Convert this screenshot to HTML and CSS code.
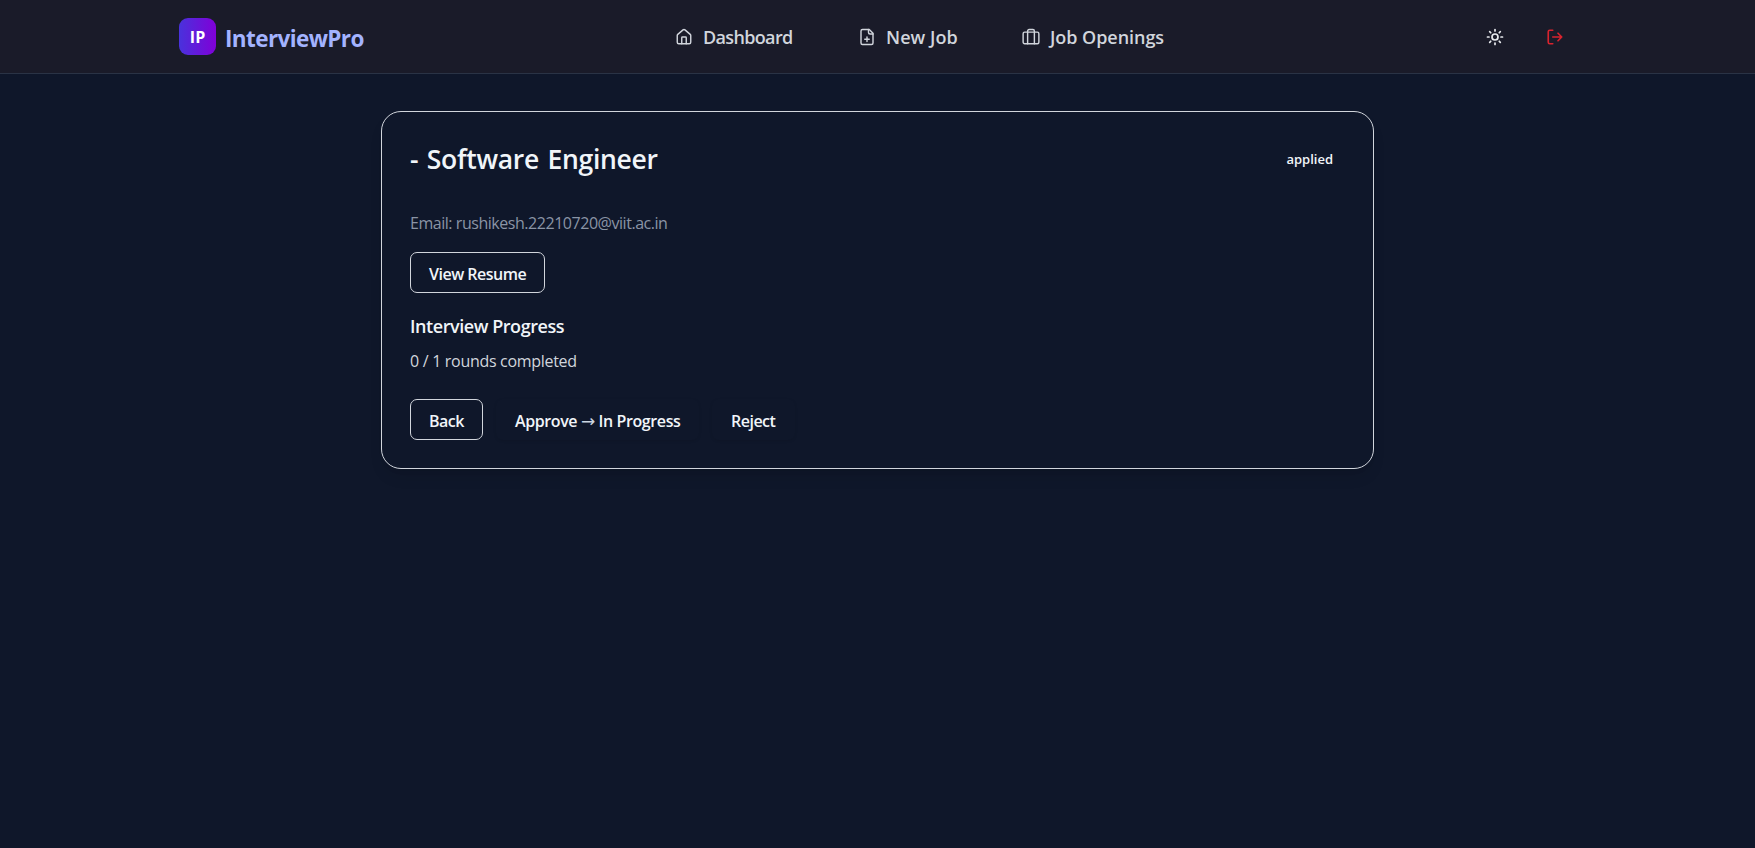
FILE: index.html
```html
<!DOCTYPE html>
<html lang="en">
<head>
<meta charset="utf-8">
<title>InterviewPro</title>
<link rel="stylesheet" href="styles.css">
</head>
<body>
<header class="topbar">
  <a class="brand"><span class="logo">IP</span><span class="brand-name">InterviewPro</span></a>
  <nav class="nav">
    <a class="nav-item dashboard"><svg class="icon" viewBox="0 0 24 24"><path d="M15 21v-8a1 1 0 0 0-1-1h-4a1 1 0 0 0-1 1v8"/><path d="M3 10a2 2 0 0 1 .709-1.528l7-5.999a2 2 0 0 1 2.582 0l7 5.999A2 2 0 0 1 21 10v9a2 2 0 0 1-2 2H5a2 2 0 0 1-2-2z"/></svg><span>Dashboard</span></a>
    <a class="nav-item new-job"><svg class="icon" viewBox="0 0 24 24"><path d="M15 2H6a2 2 0 0 0-2 2v16a2 2 0 0 0 2 2h12a2 2 0 0 0 2-2V7Z"/><path d="M14 2v4a2 2 0 0 0 2 2h4"/><path d="M9 15h6M12 18v-6"/></svg><span>New Job</span></a>
    <a class="nav-item openings"><svg class="icon" viewBox="0 0 24 24"><rect x="1.5" y="5.5" width="21" height="15.5" rx="2"/><path d="M16.5 21V4a2 2 0 0 0-2-2h-5a2 2 0 0 0-2 2v17"/></svg><span>Job Openings</span></a>
  </nav>
  <div class="actions">
    <svg class="icon sun" viewBox="0 0 24 24"><circle cx="12" cy="12" r="4"/><path d="M12 2v2M12 20v2M4.93 4.93l1.41 1.41M17.66 17.66l1.41 1.41M2 12h2M20 12h2M6.34 17.66l-1.41 1.41M19.07 4.93l-1.41 1.41"/></svg>
    <svg class="icon logout" viewBox="0 0 24 24"><path d="M9 3H5a2 2 0 0 0-2 2v14a2 2 0 0 0 2 2h4M16 17l5-5-5-5M21 12H9"/></svg>
  </div>
</header>
<main class="card">
  <div class="card-head">
    <h1 class="title">- Software Engineer</h1>
    <span class="status">applied</span>
  </div>
  <p class="email">Email: rushikesh.22210720@viit.ac.in</p>
  <a class="btn outline resume">View Resume</a>
  <h2 class="subtitle">Interview Progress</h2>
  <p class="rounds">0 / 1 rounds completed</p>
  <div class="buttons">
    <a class="btn outline back">Back</a>
    <a class="btn approve">Approve <span class="arrow">→</span> In Progress</a>
    <a class="btn reject">Reject</a>
  </div>
</main>
</body>
</html>
```
FILE: styles.css
```css
* { box-sizing: border-box; }
body { margin: 0; min-height: 848px; background: #0f172a; color: #f1f5f9; font-family: "Open Sans", "Noto Sans", sans-serif; font-size: 16px; white-space: nowrap; }
h1, h2, p { margin: 0; }
.topbar { height: 74px; padding: 0 191px 0 179px; display: grid; grid-template-columns: 496px 1fr 78px; align-items: center; background: #1a1b29; border-bottom: 1px solid #2a3345; }
.brand { display: flex; align-items: center; gap: 9px; }
.logo { width: 37px; height: 37px; border-radius: 9px; background: linear-gradient(90deg, #4932dc, #8000d8); color: #fff; font-size: 16px; font-weight: 700; line-height: 39px; text-align: center; }
.brand-name { color: #a3b3ff; font-size: 22.5px; font-weight: 700; letter-spacing: -0.6px; line-height: 30px; padding-top: 4px; }
.nav { display: flex; color: #d1d5dc; font-size: 18px; font-weight: 600; line-height: 24px; }
.nav-item { display: flex; align-items: center; gap: 10px; }
.nav-item span { padding-top: 1px; }
.dashboard { width: 183px; letter-spacing: -0.65px; }
.new-job { width: 164px; letter-spacing: 0.05px; }
.openings { letter-spacing: -0.05px; }
.icon { width: 18px; height: 18px; flex: none; fill: none; stroke: currentColor; stroke-width: 2; stroke-linecap: round; stroke-linejoin: round; }
.nav .icon { stroke-width: 1.9; }
.actions { display: flex; justify-content: space-between; }
.sun { color: #e5e7eb; stroke-width: 2.3; }
.logout { color: #d9232e; stroke-width: 2.2; }
.card { width: 993px; height: 358px; margin: 37px auto 0; padding: 28px; border: 1px solid #d1d5dc; border-radius: 20px; box-shadow: 0 10px 15px -3px #0000001a, 0 4px 6px -4px #0000001a; }
.card-head { display: flex; justify-content: space-between; height: 38px; align-items: center; padding-right: 12px; }
.title { font-size: 26.5px; font-weight: 600; letter-spacing: -0.3px; word-spacing: 2px; line-height: 38px; }
.status { font-size: 13px; font-weight: 600; line-height: 20px; margin-top: -1px; }
.email { margin-top: 33px; color: #8a94a5; line-height: 24px; letter-spacing: -0.46px; }
.btn { display: flex; align-items: center; height: 41px; padding: 2px 0 0 18px; border: 1px solid transparent; border-radius: 7px; font-weight: 600; letter-spacing: -0.5px; }
.outline { border-color: #d1d5dc; }
.resume { width: 135px; margin-top: 17px; }
.subtitle { margin-top: 20px; font-size: 18px; font-weight: 600; line-height: 26px; letter-spacing: -0.44px; }
.rounds { margin-top: 10px; color: #d1d5dc; line-height: 24px; letter-spacing: -0.3px; }
.buttons { display: flex; gap: 13px; margin-top: 26px; }
.back { width: 73px; }
.approve { width: 203px; white-space: pre; letter-spacing: -0.4px; }
.reject { width: 83px; }
.approve, .reject { box-shadow: 0 1px 3px #0000001a; }
.arrow { font-family: "DejaVu Sans", sans-serif; font-weight: 400; font-size: 17px; line-height: 20px; color: #cbd5e1; }
```
